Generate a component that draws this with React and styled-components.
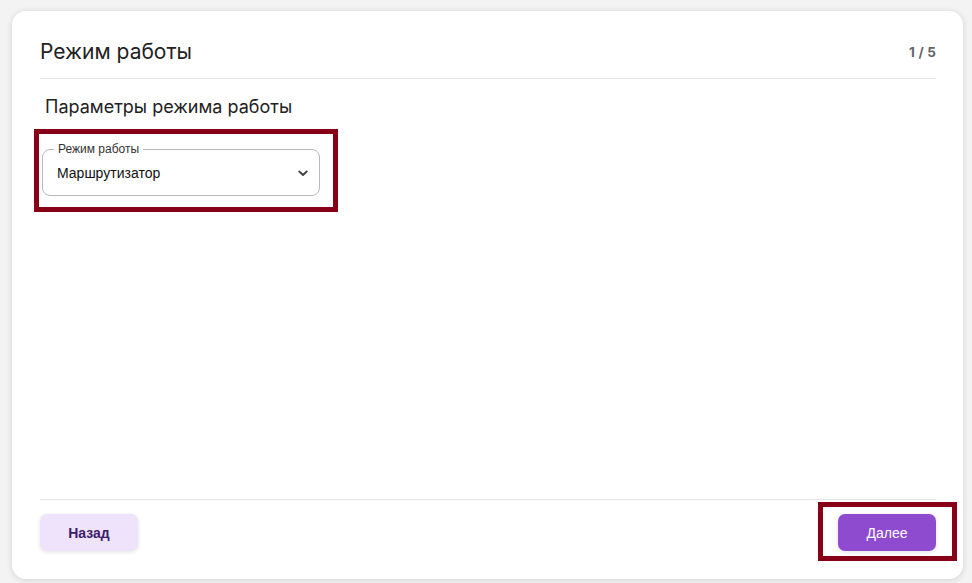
import React from 'react';
import styled, { createGlobalStyle } from 'styled-components';

const GlobalStyle = createGlobalStyle`
    html, body {
        margin: 0;
        padding: 0;
        background-color: #f3f3f3;
        font-family: Inter, Roboto, "Liberation Sans", Arial, sans-serif;
    }
`;

const Page = styled.div`
    width: 972px;
    height: 583px;
    box-sizing: border-box;
    padding: 11px 9px 4px 12px;
`;

const Card = styled.div`
    height: 100%;
    box-sizing: border-box;
    background-color: #ffffff;
    border-radius: 14px;
    box-shadow: 0 1px 6px rgba(0, 0, 0, 0.14);
    padding: 0 27px 0 28px;
    display: flex;
    flex-direction: column;
`;

const Header = styled.div`
    display: flex;
    justify-content: space-between;
    align-items: center;
    padding: 28px 0 14px;
    border-bottom: 1px solid #e6e6e6;
`;

const Title = styled.h1`
    margin: 0;
    font-size: 21px;
    line-height: 25px;
    font-weight: 400;
    color: #222;
`;

const Step = styled.span`
    font-size: 13.5px;
    font-weight: 700;
    color: #666;
    word-spacing: 0.5px;
`;

const Body = styled.div`
    flex: 1;
    display: flex;
    flex-direction: column;
    align-items: flex-start;
`;

const Subtitle = styled.h2`
    margin: 17px 0 25px 5px;
    font-size: 18px;
    line-height: 21px;
    font-weight: 400;
    color: #222;
`;

const Marked = styled.div`
    position: relative;
    margin-left: ${p => p.$indent || 0}px;

    &::after {
        content: '';
        position: absolute;
        top: ${p => -p.$t}px;
        left: ${p => -p.$l}px;
        right: ${p => -p.$r}px;
        bottom: ${p => -p.$b}px;
        border: 5px solid #870017;
        pointer-events: none;
    }
`;

const Field = styled.fieldset`
    margin: 0;
    width: 278px;
    box-sizing: border-box;
    padding: 0 11px 5px 14px;
    border: 1px solid #b9b9b9;
    border-radius: 8px;
    font-family: "Liberation Sans", Arial, sans-serif;
`;

const Legend = styled.legend`
    margin-left: -3px;
    padding: 0 4px;
    font-size: 12px;
    line-height: 14px;
    color: #333;
`;

const SelectRow = styled.div`
    height: 34px;
    display: flex;
    align-items: center;
    justify-content: space-between;
    font-size: 14px;
    color: #111;
`;

const Footer = styled.div`
    display: flex;
    justify-content: space-between;
    align-items: center;
    border-top: 1px solid #e6e6e6;
    padding: 14px 0 28px;
`;

const Button = styled.button`
    width: 98px;
    height: 37px;
    border: none;
    border-radius: 7px;
    font-family: "Liberation Sans", Arial, sans-serif;
    font-size: 14px;
    font-weight: ${p => (p.$primary ? 400 : 700)};
    color: ${p => (p.$primary ? '#ffffff' : '#3e1c6a')};
    background-color: ${p => (p.$primary ? '#8e4bcf' : '#efe2fb')};
    box-shadow: 0 1px 4px rgba(0, 0, 0, 0.12);
    cursor: pointer;
`;

const Chevron = () => (
    <svg width="10" height="7" viewBox="0 0 10 7">
        <path d="M1.3 1.5 L5 5 L8.7 1.5" fill="none" stroke="#444" strokeWidth="1.9" strokeLinecap="round" strokeLinejoin="round" />
    </svg>
);

const App = () => {
    return (
        <Page>
            <GlobalStyle />
            <Card>
                <Header>
                    <Title>Режим работы</Title>
                    <Step>1 / 5</Step>
                </Header>
                <Body>
                    <Subtitle>Параметры режима работы</Subtitle>
                    <Marked $indent={2} $t={13} $l={8} $r={18} $b={16}>
                        <Field>
                            <Legend>Режим работы</Legend>
                            <SelectRow>
                                Маршрутизатор
                                <Chevron />
                            </SelectRow>
                        </Field>
                    </Marked>
                </Body>
                <Footer>
                    <Button>Назад</Button>
                    <Marked $t={12} $l={20} $r={21} $b={10}>
                        <Button $primary>Далее</Button>
                    </Marked>
                </Footer>
            </Card>
        </Page>
    );
};

export default App;
